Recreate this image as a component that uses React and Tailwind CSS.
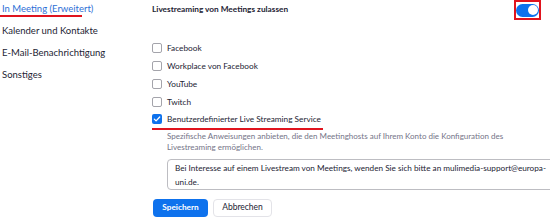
import React from "react";

function Box({ checked }) {
  return checked ? (
    <span className="w-[10px] h-[10px] rounded-[2px] bg-[#0e72ed] flex items-center justify-center shrink-0">
      <svg width="8" height="8" viewBox="0 0 8 8"><path d="M1.3 4.1 L3.1 5.9 L6.7 2" stroke="white" strokeWidth="1.3" fill="none" strokeLinecap="round" strokeLinejoin="round"/></svg>
    </span>
  ) : (
    <span className="w-[10px] h-[10px] rounded-[2px] border border-[#a4a4ab] bg-white shrink-0" />
  );
}

function Row({ label, checked }) {
  return (
    <div className="flex items-center gap-[5px] h-[17.75px]">
      <Box checked={checked} />
      <span className="text-[8.25px] text-[#232333] leading-[12px]">{label}</span>
    </div>
  );
}

export default function App() {
  return (
    <div className="w-[550px] h-[221px] bg-white overflow-hidden flex" style={{ fontFamily: "Lato, 'Open Sans', sans-serif" }}>
      <div className="w-[152px] shrink-0 flex flex-col text-[9.5px] text-[#232333]">
        <div className="h-[20px] flex flex-col pl-[2px] pt-[2px]">
          <span className="text-[#2d6fd6] leading-[14px]">In Meeting (Erweitert)</span>
          <span className="h-[2px] w-[82px] -ml-[2px] bg-[#e0141e] -mt-[1px]" />
        </div>
        <div className="h-[22px] pl-[2px] flex items-center">Kalender und Kontakte</div>
        <div className="h-[22px] pl-[2px] flex items-center">E-Mail-Benachrichtigung</div>
        <div className="h-[22px] pl-[2px] flex items-center">Sonstiges</div>
      </div>
      <div className="flex-1 min-w-0 flex flex-col pr-[5px]">
        <div className="flex justify-between items-start h-[20px]">
          <span className="text-[8.25px] font-bold text-[#232333] leading-[12px] mt-[3px]">Livestreaming von Meetings zulassen</span>
          <div className="border-2 border-[#e0141e] w-[27px] h-[20px] flex items-center justify-center mr-[4px]">
            <div className="w-[23px] h-[13px] rounded-full bg-[#0e72ed] flex items-center justify-end pr-[1.5px]">
              <span className="w-[10px] h-[10px] rounded-full bg-white" />
            </div>
          </div>
        </div>
        <div className="mt-[19.4px] flex flex-col">
          <Row label="Facebook" />
          <Row label="Workplace von Facebook" />
          <Row label="YouTube" />
          <Row label="Twitch" />
          <Row label="Benutzerdefinierter Live Streaming Service" checked />
          <span className="h-[2px] w-[171px] bg-[#e0141e] mt-[-0.5px]" />
        </div>
        <div className="pl-[15px] pr-[30px] mt-[1.5px] text-[8px] leading-[11px] text-[#747487]">
          Spezifische Anweisungen anbieten, die den Meetinghosts auf Ihrem Konto die Konfiguration des Livestreaming ermöglichen.
        </div>
        <div className="ml-[15px] w-[398px] shrink-0 mt-[5.5px] border border-[#bdbdc2] rounded-[4px] pl-[7px] pr-[4px] pt-[1px] text-[8.2px] leading-[14px] text-[#232333] h-[31px]">
          Bei Interesse auf einem Livestream von Meetings, wenden Sie sich bitte an mulimedia-support@europa-uni.de.
        </div>
        <div className="flex gap-[5px] mt-[9px] pl-[1px]">
          <button className="h-[18px] w-[55px] rounded-[4px] bg-[#0e72ed] text-white text-[8.25px] font-bold">Speichern</button>
          <button className="h-[18px] w-[59px] rounded-[4px] border border-[#e3e3e8] bg-white text-[#232333] text-[8.5px]">Abbrechen</button>
        </div>
      </div>
    </div>
  );
}
